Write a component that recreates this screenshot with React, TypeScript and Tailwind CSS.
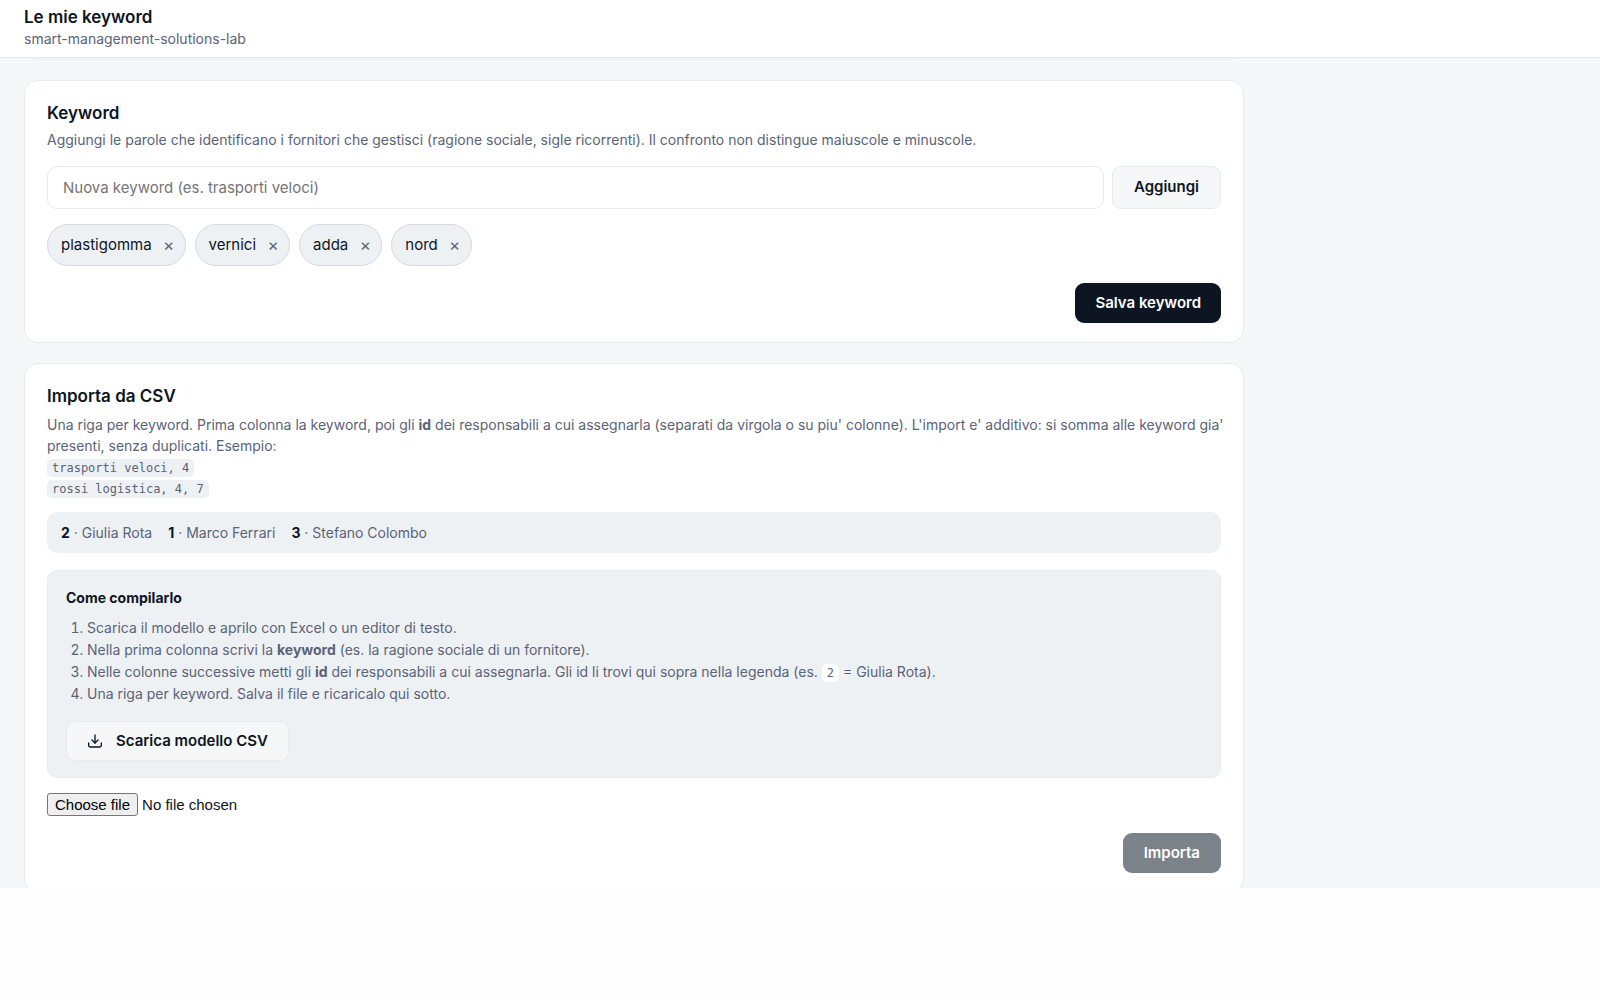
import { useState, type ReactNode } from "react";

const people = [
  { id: 2, name: "Giulia Rota" },
  { id: 1, name: "Marco Ferrari" },
  { id: 3, name: "Stefano Colombo" },
];

function Card({ title, children }: { title: string; children: ReactNode }) {
  return (
    <section className="mb-5 rounded-[14px] border border-[#e8ebee] bg-white px-[22px] pt-[21px] pb-[19px]">
      <h2 className="text-[17px] leading-[22px] font-semibold text-[#0d1522]">{title}</h2>
      {children}
    </section>
  );
}

function Code({ children, light }: { children: ReactNode; light?: boolean }) {
  return (
    <code
      className={
        "rounded-[5px] px-[5px] py-0.5 font-['DejaVu_Sans_Mono',monospace] text-[12px] leading-[16px] " +
        (light ? "bg-white" : "bg-[#eef1f4]")
      }
    >
      {children}
    </code>
  );
}

function DownloadIcon() {
  return (
    <svg
      width="16"
      height="16"
      viewBox="0 0 24 24"
      fill="none"
      stroke="currentColor"
      strokeWidth="2"
      strokeLinecap="round"
      strokeLinejoin="round"
      aria-hidden="true"
    >
      <path d="M12 3v12" />
      <path d="m7.500 10.500 4.500 4.500 4.500-4.500" />
      <path d="M2.500 15v3.500a2.500 2.500 0 0 0 2.500 2.500h14a2.500 2.500 0 0 0 2.500-2.500V15" />
    </svg>
  );
}

export default function App() {
  const [keywords, setKeywords] = useState(["plastigomma", "vernici", "adda", "nord"]);
  const [draft, setDraft] = useState("");
  const [file, setFile] = useState("");

  const add = () => {
    const value = draft.trim();
    if (value && !keywords.includes(value)) setKeywords([...keywords, value]);
    setDraft("");
  };

  return (
    <div className="min-h-screen bg-[#fefefe] font-['Inter',sans-serif] text-[#0d1522]">
      <header className="border-b border-[#e4e8ec] bg-white px-6 pt-1.5 pb-[7px]">
        <h1 className="text-[17px] leading-[22px] font-semibold">Le mie keyword</h1>
        <p className="text-[14px] leading-[22px] text-[#5b6376]">smart-management-solutions-lab</p>
      </header>

      <main className="overflow-hidden bg-[#f5f7f9] px-6">
        <div className="-mb-[25px] max-w-[1220px]">
          <div className="-mt-[26px] mb-5 h-7 rounded-[14px] border border-[#e8ebee] bg-[#f5f7f9]" />

          <Card title="Keyword">
            <p className="mt-[5px] text-[14px] leading-[22px] text-[#5b6376]">
              Aggiungi le parole che identificano i fornitori che gestisci (ragione sociale, sigle ricorrenti). Il
              confronto non distingue maiuscole e minuscole.
            </p>
            <form
              className="mt-[15px] flex gap-2"
              onSubmit={(e) => {
                e.preventDefault();
                add();
              }}
            >
              <input
                aria-label="Nuova keyword"
                value={draft}
                onChange={(e) => setDraft(e.target.value)}
                placeholder="Nuova keyword (es. trasporti veloci)"
                className="h-[43px] min-w-0 flex-1 rounded-[10px] border border-[#e8ebee] bg-white px-[15px] text-[15px] placeholder:text-[#757575]"
              />
              <button
                type="submit"
                className="rounded-[9px] border border-[#e8ebee] bg-[#f5f7f9] px-[21px] text-[15px] font-semibold"
              >
                Aggiungi
              </button>
            </form>
            <ul className="mt-[15px] flex flex-wrap gap-[9px]">
              {keywords.map((word) => (
                <li
                  key={word}
                  className="flex h-[42px] items-center rounded-full border border-[#d5dae1] bg-[#eef1f4] pr-[6px] pl-[13px] text-[15px]"
                >
                  {word}
                  <button
                    type="button"
                    aria-label={`Rimuovi ${word}`}
                    onClick={() => setKeywords(keywords.filter((k) => k !== word))}
                    className="ml-[7px] w-5 text-center text-[17px] leading-5 text-[#5b6376]"
                  >
                    ×
                  </button>
                </li>
              ))}
            </ul>
            <div className="mt-[17px] flex justify-end">
              <button type="button" className="h-10 rounded-[9px] bg-[#0d1522] px-5 text-[15px] font-semibold text-white">
                Salva keyword
              </button>
            </div>
          </Card>

          <Card title="Importa da CSV">
            <p className="-mr-4 mt-[7px] text-[14px] leading-[21px] text-[#5b6376]">
              Una riga per keyword. Prima colonna la keyword, poi gli <strong className="font-bold">id</strong> dei
              responsabili a cui assegnarla (separati da virgola o su piu' colonne). L'import e' additivo: si somma alle
              keyword gia' presenti, senza duplicati. Esempio:
              <br />
              <Code>trasporti veloci, 4</Code>
              <br />
              <Code>rossi logistica, 4, 7</Code>
            </p>
            <ul className="mt-[14px] flex flex-wrap gap-4 rounded-[10px] bg-[#eef1f4] px-[14px] py-2.5 text-[14px] leading-[21px] text-[#5b6376]">
              {people.map((p) => (
                <li key={p.id}>
                  <strong className="font-bold text-[#0d1522]">{p.id}</strong> · {p.name}
                </li>
              ))}
            </ul>

            <div className="mt-[17px] rounded-[10px] border border-[#e8ebee] bg-[#eef1f4] px-[18px] py-4">
              <h3 className="text-[14px] leading-[22px] font-bold">Come compilarlo</h3>
              <ol className="mt-2 list-decimal pl-[21px] text-[14px] leading-[22px] text-[#5b6376]">
                <li>Scarica il modello e aprilo con Excel o un editor di testo.</li>
                <li>
                  Nella prima colonna scrivi la <strong className="font-bold">keyword</strong> (es. la ragione sociale di
                  un fornitore).
                </li>
                <li>
                  Nelle colonne successive metti gli <strong className="font-bold">id</strong> dei responsabili a cui
                  assegnarla. Gli id li trovi qui sopra nella legenda (es. <Code light>2</Code> = Giulia Rota).
                </li>
                <li>Una riga per keyword. Salva il file e ricaricalo qui sotto.</li>
              </ol>
              <button
                type="button"
                className="mt-4 flex h-10 items-center gap-[13px] rounded-[9px] border border-[#e8ebee] bg-[#f5f7f9] px-5 text-[15px] font-semibold"
              >
                <DownloadIcon />
                Scarica modello CSV
              </button>
            </div>

            <label className="mt-[15px] flex w-fit items-center gap-1 font-['Liberation_Sans',sans-serif] text-[15px] leading-[19px]">
              <input
                type="file"
                accept=".csv"
                className="sr-only"
                onChange={(e) => setFile(e.target.files?.[0]?.name ?? "")}
              />
              <span className="rounded-[3px] border border-[#767676] bg-[#efefef] px-[7px] py-px text-black">
                Choose file
              </span>
              <span>{file || "No file chosen"}</span>
            </label>
            <div className="mt-[17px] flex justify-end">
              <button
                type="button"
                disabled={!file}
                className="h-10 rounded-[9px] bg-[#0d1522] px-[21px] text-[15px] font-semibold text-white disabled:bg-[#7c8289]"
              >
                Importa
              </button>
            </div>
          </Card>
        </div>
      </main>
    </div>
  );
}
